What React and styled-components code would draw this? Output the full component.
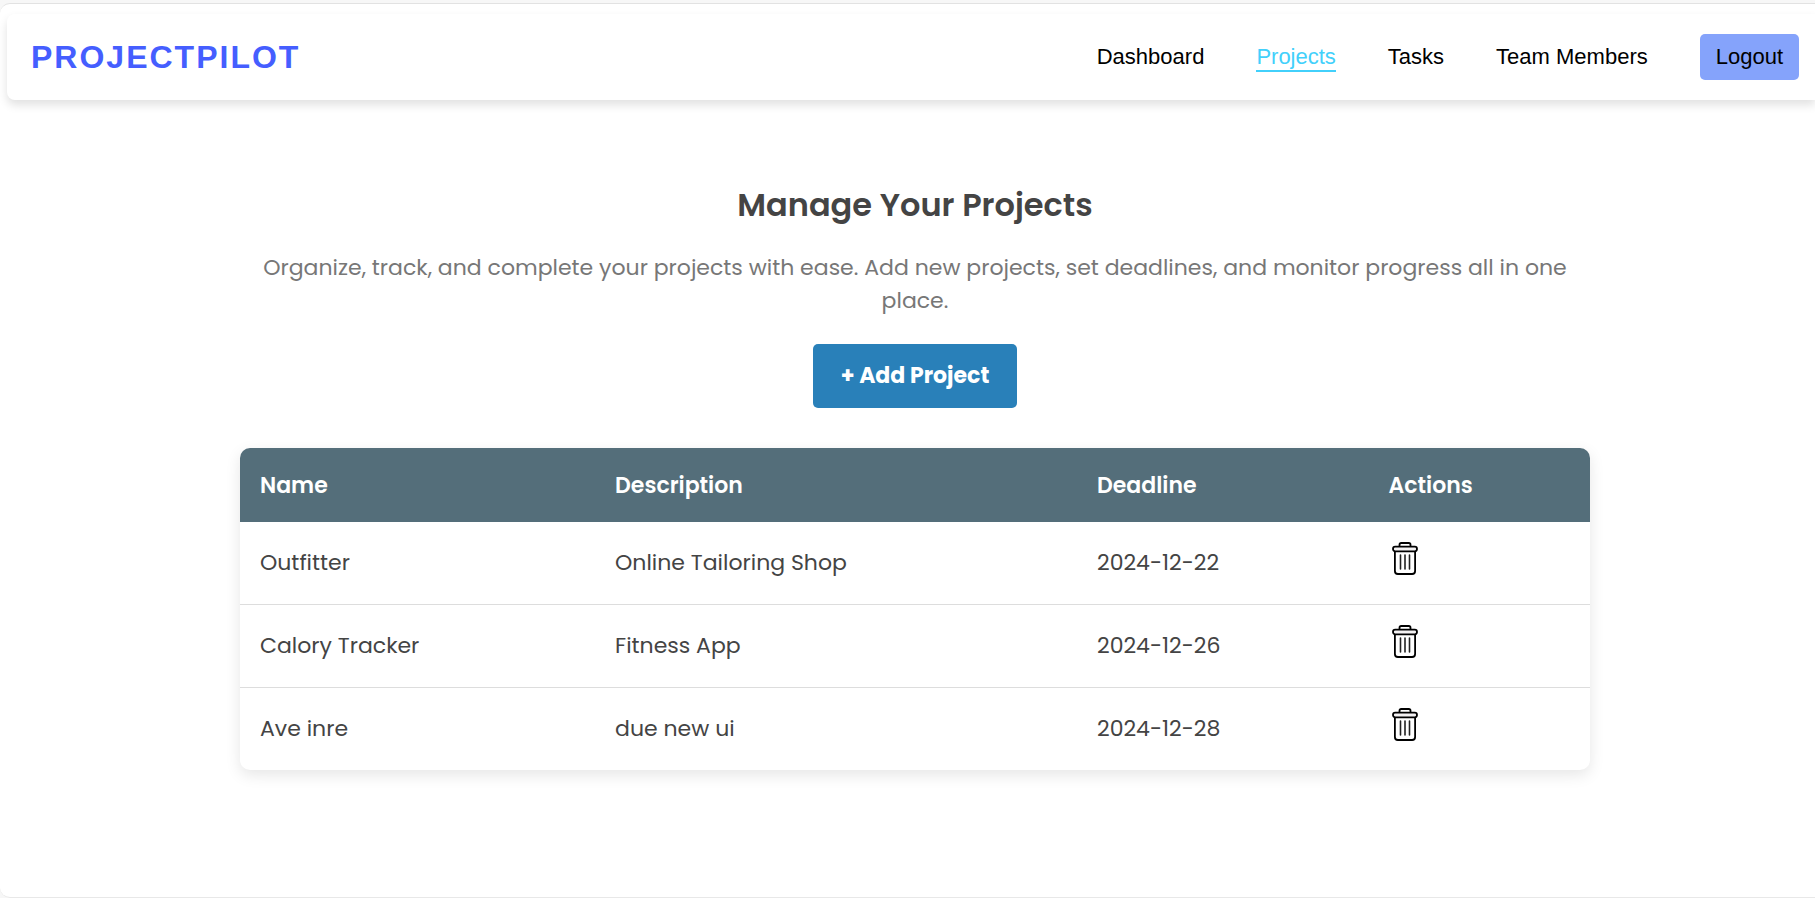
import React from "react";
import styled, { createGlobalStyle } from "styled-components";

const GlobalStyle = createGlobalStyle`
  *, *::before, *::after { box-sizing: border-box; }
  body {
    margin: 0;
    background: #f7f7f7;
    color: #444;
    font-family: Poppins, Inter, sans-serif;
    font-size: 22px;
  }
`;

const Page = styled.div`
  min-height: calc(100vh - 3px);
  margin-top: 3px;
  padding-bottom: 24px;
  overflow: hidden;
  background: #fff;
  border-top: 1px solid #e2e2e2;
  border-bottom: 1px solid #e8e8e8;
  border-radius: 10px 0 0 10px;
`;

const NavBar = styled.nav`
  display: flex;
  align-items: center;
  justify-content: space-between;
  min-height: 86px;
  margin: 10px 0 0 7px;
  padding: 0 16px 0 24px;
  background: #fff;
  border-radius: 8px 0 0 8px;
  box-shadow: 0 5px 10px rgba(0, 0, 0, 0.12);
  font-family: "Liberation Sans", Arial, sans-serif;
`;

const Brand = styled.a`
  color: #455eff;
  font-size: 32px;
  font-weight: 700;
  letter-spacing: 2px;
  text-decoration: none;
  text-transform: uppercase;
`;

const NavLinks = styled.div`
  display: flex;
  align-items: center;
  gap: 52px;
`;

const NavLink = styled.a`
  color: ${({ $active }) => ($active ? "#42d0fb" : "#000")};
  border-top: 2px solid transparent;
  border-bottom: 2px solid ${({ $active }) => ($active ? "#42d0fb" : "transparent")};
  font-size: 22px;
  line-height: 26px;
  text-decoration: none;
`;

const LogoutButton = styled.button`
  height: 46px;
  padding: 0 16px;
  border: 0;
  border-radius: 5px;
  background: #85a3fb;
  color: #000;
  font: 22px "Liberation Sans", Arial, sans-serif;
`;

const Content = styled.div`
  padding-left: 15px;
`;

const Main = styled.main`
  display: flex;
  flex-direction: column;
  align-items: center;
  max-width: 1350px;
  margin: 80px auto 0;
`;

const Title = styled.h1`
  margin: 0;
  color: #444;
  font-size: 32px;
  font-weight: 600;
  line-height: 50px;
`;

const Intro = styled.p`
  margin: 21px 0 27px;
  padding: 0 20px;
  color: #777;
  font-size: 22px;
  line-height: 33px;
  text-align: center;
`;

const AddButton = styled.button`
  height: 64px;
  padding: 0 28px 2px;
  border: 0;
  border-radius: 5px;
  background: #2980b9;
  color: #fff;
  font-family: inherit;
  font-size: 22px;
  font-weight: 700;
`;

const TableCard = styled.div`
  width: 100%;
  margin-top: 40px;
  overflow: hidden;
  background: #fff;
  border-radius: 10px;
  box-shadow: 0 5px 15px rgba(0, 0, 0, 0.1);
`;

const Table = styled.table`
  width: 100%;
  table-layout: fixed;
  border-spacing: 0;
  text-align: left;
`;

const HeadCell = styled.th`
  width: ${({ $width }) => $width};
  height: 74px;
  padding: 0 20px;
  background: #546e7a;
  color: #fff;
  font-weight: 600;
`;

const Cell = styled.td`
  height: 83px;
  padding: 0 20px 2px;
  border-bottom: 1px solid #ddd;

  tr:last-child > & {
    height: 82px;
    border-bottom: 0;
  }
`;

const IconButton = styled.button`
  display: block;
  padding: 0 3px;
  margin-bottom: 8px;
  border: 0;
  background: none;

  svg { display: block; }
`;

const TrashIcon = () => (
  <svg width="26" height="33" viewBox="0 0 26 33" fill="#fff" stroke="#000" strokeWidth="1.8" strokeLinecap="round" strokeLinejoin="round" aria-hidden="true">
    <path d="M7.5 4.5V2.7Q7.5 1 9.2 1h7.6q1.7 0 1.7 1.7v1.8" />
    <path d="M2.9 9v20q0 3 3 3h14.2q3 0 3-3V9" />
    <rect x="1" y="4.7" width="24" height="4.6" rx="2.2" fill="#f3f1f2" />
    <path d="M8.5 13v14M13 13v14M17.5 13v14" stroke="#222" strokeWidth="1.6" />
  </svg>
);

const links = ["Dashboard", "Projects", "Tasks", "Team Members"];

const columns = [
  { label: "Name", width: "26.3%" },
  { label: "Description", width: "35.7%" },
  { label: "Deadline", width: "21.6%" },
  { label: "Actions", width: "16.4%" },
];

const projects = [
  { name: "Outfitter", description: "Online Tailoring Shop", deadline: "2024-12-22" },
  { name: "Calory Tracker", description: "Fitness App", deadline: "2024-12-26" },
  { name: "Ave inre", description: "due new ui", deadline: "2024-12-28" },
];

export default function App() {
  return (
    <>
      <GlobalStyle />
      <Page>
        <NavBar>
          <Brand href="#">ProjectPilot</Brand>
          <NavLinks>
            {links.map((label) => (
              <NavLink key={label} href="#" $active={label === "Projects"}>{label}</NavLink>
            ))}
            <LogoutButton type="button">Logout</LogoutButton>
          </NavLinks>
        </NavBar>
        <Content>
          <Main>
            <Title>Manage Your Projects</Title>
            <Intro>
              Organize, track, and complete your projects with ease. Add new projects, set
              deadlines, and monitor progress all in one place.
            </Intro>
            <AddButton type="button">+ Add Project</AddButton>
            <TableCard>
              <Table>
                <thead>
                  <tr>
                    {columns.map(({ label, width }) => (
                      <HeadCell key={label} $width={width} scope="col">{label}</HeadCell>
                    ))}
                  </tr>
                </thead>
                <tbody>
                  {projects.map(({ name, description, deadline }) => (
                    <tr key={name}>
                      <Cell>{name}</Cell>
                      <Cell>{description}</Cell>
                      <Cell>{deadline}</Cell>
                      <Cell>
                        <IconButton type="button" aria-label={`Delete ${name}`}>
                          <TrashIcon />
                        </IconButton>
                      </Cell>
                    </tr>
                  ))}
                </tbody>
              </Table>
            </TableCard>
          </Main>
        </Content>
      </Page>
    </>
  );
}
